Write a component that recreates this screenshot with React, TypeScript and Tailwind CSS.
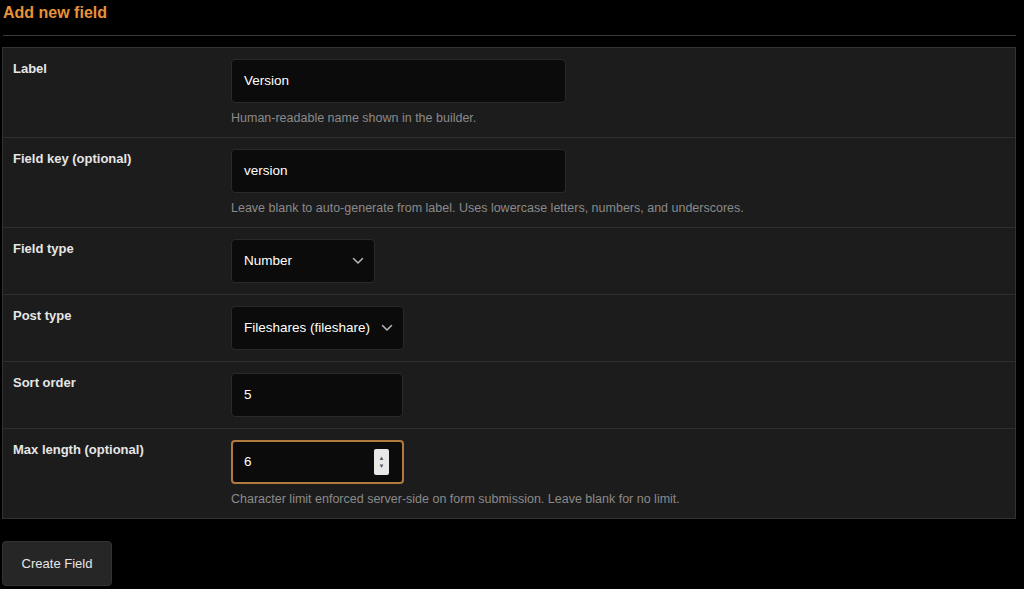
import React from "react";

const Chevron = () => (
  <svg width="12" height="8" viewBox="0 0 12 8" fill="none" stroke="#b8b8b8" strokeWidth="1.5" strokeLinecap="round" strokeLinejoin="round">
    <path d="M1.5 1.5 L6 6 L10.5 1.5" />
  </svg>
);

function Row({ label, children, help, first }: { label: string; children: React.ReactNode; help?: string; first?: boolean }) {
  return (
    <div className={`flex ${first ? "" : "border-t border-[#2e2e2e]"} py-[11px]`}>
      <div className="w-[228px] pl-[10px] text-[13px] font-bold text-[#e6e6e6]">{label}</div>
      <div className="flex flex-col">
        {children}
        {help && <div className="mt-[7px] text-[12.5px] leading-[16px] text-[#8a8a8a]">{help}</div>}
      </div>
    </div>
  );
}

export default function App() {
  return (
    <div className="min-h-[589px] bg-black text-white" style={{ fontFamily: "'Liberation Sans', Arial, sans-serif" }}>
      <div className="pt-[3px] pl-[3px] pr-[8px]">
        <h1 className="text-[16px] font-bold leading-[20px] text-[#e8923a]">Add new field</h1>
        <div className="mt-[12px] h-px bg-[#3a3a3a]" />
      </div>
      <div className="mt-[11px] ml-[2px] mr-[8px] border border-[#333] bg-[#1c1c1c]">
        <Row label="Label" first help="Human-readable name shown in the builder.">
          <div className="flex h-[44px] w-[335px] items-center rounded-[4px] border border-[#2a2a2a] bg-[#0b0b0b] px-3 text-[13.5px]">Version</div>
        </Row>
        <Row label="Field key (optional)" help="Leave blank to auto-generate from label. Uses lowercase letters, numbers, and underscores.">
          <div className="flex h-[44px] w-[335px] items-center rounded-[4px] border border-[#2a2a2a] bg-[#0b0b0b] px-3 text-[13.5px]">version</div>
        </Row>
        <Row label="Field type">
          <div className="flex h-[44px] w-[144px] items-center justify-between rounded-[4px] border border-[#2a2a2a] bg-[#0b0b0b] pl-3 pr-[10px] text-[13.5px]">Number<Chevron /></div>
        </Row>
        <Row label="Post type">
          <div className="flex h-[44px] w-[173px] items-center justify-between rounded-[4px] border border-[#2a2a2a] bg-[#0b0b0b] pl-3 pr-[10px] text-[13.5px]">Fileshares (fileshare)<Chevron /></div>
        </Row>
        <Row label="Sort order">
          <div className="flex h-[44px] w-[172px] items-center rounded-[4px] border border-[#2a2a2a] bg-[#0b0b0b] px-3 text-[13.5px]">5</div>
        </Row>
        <Row label="Max length (optional)" help="Character limit enforced server-side on form submission. Leave blank for no limit.">
          <div className="flex h-[44px] w-[173px] items-center justify-between rounded-[4px] border-2 border-[#b07a3c] bg-[#0b0b0b] pl-[11px] pr-[13px] text-[13.5px]">
            6
            <div className="flex h-[26px] w-[15px] flex-col items-center justify-center rounded-[2px] bg-[#e8e8e8] text-[6px] leading-[8px] text-[#555]">
              <span>▲</span><span>▼</span>
            </div>
          </div>
        </Row>
      </div>
      <button className="mt-[22px] ml-[2px] h-[45px] w-[110px] rounded-[4px] border border-[#333] bg-[#262626] text-[13px] text-[#e6e6e6]">Create Field</button>
    </div>
  );
}
